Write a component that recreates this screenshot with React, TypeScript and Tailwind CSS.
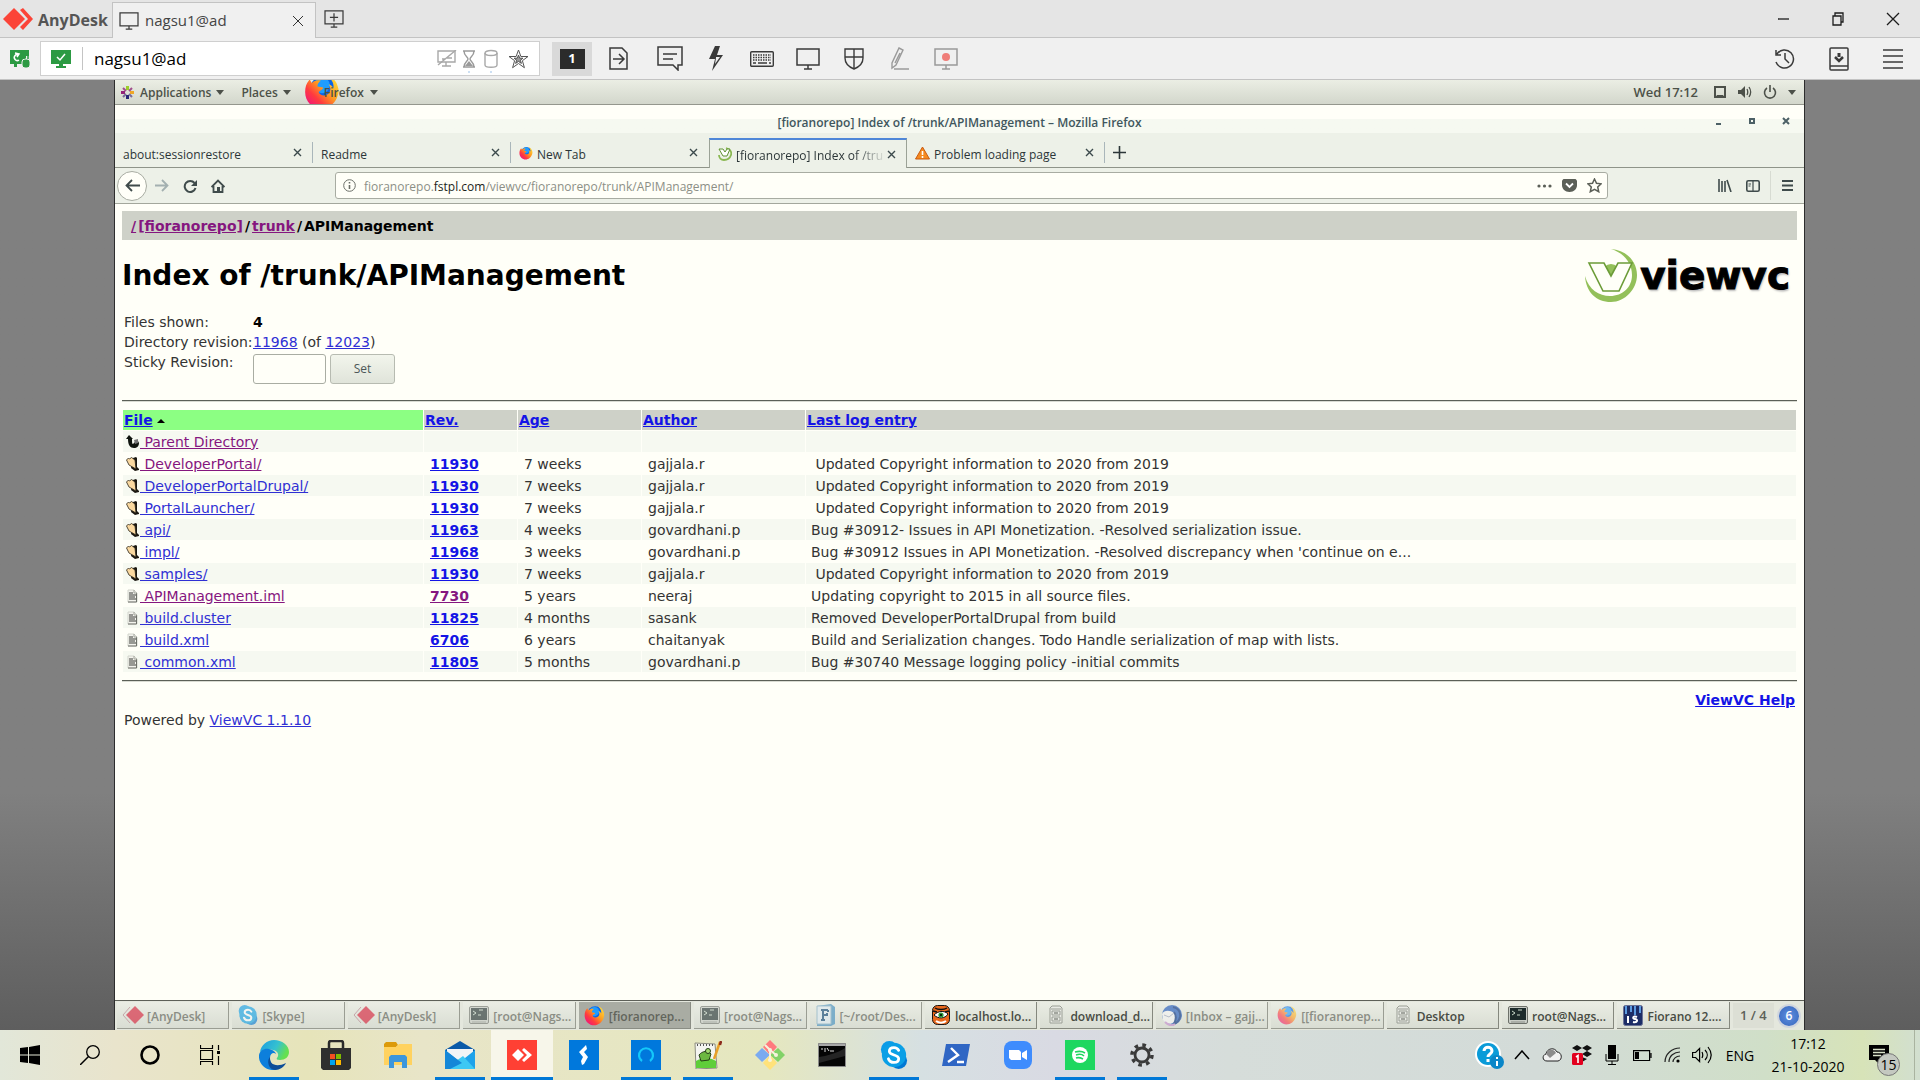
import React from "react";

type SvgProps = { w: number; h: number; box?: string; className?: string; children: React.ReactNode };

function Svg({ w, h, box, className, children }: SvgProps) {
  return (
    <svg
      width={w}
      height={h}
      viewBox={box ?? `0 0 ${w} ${h}`}
      fill="none"
      aria-hidden="true"
      className={`shrink-0 ${className ?? ""}`}
    >
      {children}
    </svg>
  );
}

/* ---------- shared icons ---------- */

function FirefoxIcon({ size, id, className }: { size: number; id: string; className?: string }) {
  return (
    <Svg w={size} h={size} box="0 0 32 32" className={className}>
      <defs>
        <linearGradient id={id} x1="0.9" y1="0.1" x2="0.1" y2="0.9">
          <stop offset="0" stopColor="#ffd83a" />
          <stop offset="0.4" stopColor="#ff9a1f" />
          <stop offset="0.7" stopColor="#ff3b3e" />
          <stop offset="1" stopColor="#f0147d" />
        </linearGradient>
      </defs>
      <circle cx="17" cy="14" r="12" fill="#0a66e8" />
      <circle cx="16" cy="10" r="7" fill="#1f9cff" />
      <path
        d="M5 5c1 1 1 2 2 3 2-2 5-3 8-2-3 2-3 4-3 5l5 1c0 2-2 2-4 4 1 3 5 4 8 2 3-2 3-6 1-9 3 1 4 3 4 4 1-4-1-8-5-11 5 1 8 5 9 9 1 3 1 5 0 8-2 7-8 12-15 12C8 31 1 25 1 16c0-4 1-8 4-11z"
        fill={`url(#${id})`}
      />
    </Svg>
  );
}

function AnyDeskMini() {
  return (
    <Svg w={22} h={20} className="opacity-70">
      <path d="M8 2L1 10l7 8" stroke="#b88a92" />
      <path d="M13 1l9 9-9 9-9-9z" fill="#d8354b" />
    </Svg>
  );
}

function SkypeIcon({ w, h, soft }: { w: number; h: number; soft?: boolean }) {
  return (
    <Svg w={w} h={h} box="0 0 30 32" className={soft ? "opacity-60" : ""}>
      <circle cx="10" cy="10" r="9" fill="#0a9be8" />
      <circle cx="20" cy="22" r="9" fill="#0078d4" />
      <circle cx="15" cy="16" r="13" fill="#0a9fe6" />
      <path
        d="M20 11c-1-2-3-3-5-3-3 0-5 1-5 4 0 5 10 3 10 8 0 3-2 4-5 4s-5-1-6-4"
        stroke="#fff"
        strokeWidth="3"
        strokeLinecap="round"
      />
    </Svg>
  );
}

function TerminalMini({ soft }: { soft?: boolean }) {
  return (
    <Svg w={20} h={18} className={soft ? "opacity-60" : ""}>
      <rect x="0.5" y="0.5" width="19" height="17" rx="1.5" fill="#c9cdc6" stroke="#6d716a" />
      <rect x="2" y="2" width="16" height="12" fill="#1c2b2b" />
      <path d="M4 5l3 2-3 2M9 9h3M10 4h4" stroke="#c8d8c8" />
      <path d="M3 16h14" stroke="#8b8f88" />
    </Svg>
  );
}

function CabinetMini() {
  return (
    <Svg w={16} h={20}>
      <path d="M2 3l2-2h8l2 2v15H2z" fill="#e8eae4" stroke="#9a9e95" />
      <path d="M3 4h10M4 6h8v4H4zM4 12h8v4H4z" stroke="#9a9e95" />
      <path d="M6 8h4M6 14h4" stroke="#5d6159" />
    </Svg>
  );
}

function FIcon() {
  return (
    <Svg w={20} h={22} className="opacity-75">
      <path d="M1 2l14-2 4 3v17l-4 2H1z" fill="#5b9cc4" />
      <path d="M1 2h14v18H1z" fill="#dfeaf0" stroke="#8fb4c8" />
      <path d="M5 6h7M5 16h4M7 6v10M7 11h4M12 6v2M11 9v3" stroke="#2f5f86" strokeWidth="2" />
    </Svg>
  );
}

function TigerIcon() {
  return (
    <Svg w={18} h={20}>
      <rect x="0.5" y="0.5" width="17" height="19" rx="5" fill="#e8681c" stroke="#1a1410" />
      <path d="M3 3c3 2 9 2 12 0M1 6l4 1M17 6l-4 1" stroke="#111" strokeWidth="1.500" />
      <path d="M2 10c4-4 10-5 14-1-3 5-10 5-14 1z" fill="#fff" stroke="#111" />
      <circle cx="9" cy="10" r="2.600" fill="#2b9a3c" />
      <circle cx="9" cy="10" r="1" fill="#000" />
      <path d="M4 16c3 2 7 2 10 0" stroke="#fff" strokeWidth="2" />
    </Svg>
  );
}

function MailBirdIcon() {
  return (
    <Svg w={22} h={21} className="opacity-75">
      <circle cx="11" cy="10" r="10" fill="#3f6fc0" />
      <path d="M1 9c2-4 8-4 12-1 2 2 2 6 0 9-3 3-9 2-11-2z" fill="#f3f3f1" />
      <path d="M12 2c5 1 8 5 7 10-1 4-3 6-6 7 2-4 3-8 0-12" stroke="#274b8c" strokeWidth="2" />
      <path d="M3 10l5 2 5-4" stroke="#a9b0c4" />
      <path d="M4 17c3 3 7 4 10 2" stroke="#c99bd0" strokeWidth="2" />
    </Svg>
  );
}

function StudioIcon() {
  return (
    <Svg w={20} h={21}>
      <rect x="0.5" y="0.5" width="19" height="20" rx="2" fill="#1c2c66" stroke="#6b7396" />
      <path d="M3 1v8M8 1v6M12 1v9M17 1v7" stroke="#5d9be0" strokeWidth="2" />
      <path d="M5 11v7M14 12c-4-2-5 2-2 2s3 4-2 3" stroke="#fff" strokeWidth="2" />
    </Svg>
  );
}

/* ---------- AnyDesk window ---------- */

function MonitorOutline({ plus, dot, w = 24, h = 22, color = "#3a3a3a" }: { plus?: boolean; dot?: boolean; w?: number; h?: number; color?: string }) {
  return (
    <Svg w={w} h={h} box="0 0 24 22">
      <path d="M1 1h22v16H1zM12 17v4M8 21h8" stroke={color} strokeWidth="1.5" />
      {plus && <path d="M12 4v10M7 9h10" stroke={color} strokeWidth="1.5" />}
      {dot && <circle cx="12" cy="9" r="4" fill="#ef7d78" />}
    </Svg>
  );
}

const WINDOW_BUTTONS = [
  { label: "Minimize", d: "M3 8h11" },
  { label: "Restore", d: "M3 5h8v9H3zM5 5V2h8v9h-2" },
  { label: "Close", d: "M2 2l12 12M14 2L2 14" },
];

function TitleBar() {
  return (
    <header className="flex h-[38px] shrink-0 items-stretch border-b border-[#c3c3c3] bg-[#e5e5e5] font-['Open_Sans',sans-serif]">
      <div className="flex w-28 items-center gap-1 pl-[3px]">
        <Svg w={31} h={24}>
          <path d="M11 1l11 11-11 11L0 12z" fill="#fb4438" />
          <path d="M17 3l3-2 10 11-10 11-3-3 8-8z" fill="#fb4438" />
        </Svg>
        <span className="pt-[2px] text-[16px] font-bold text-[#555]">AnyDesk</span>
      </div>
      <div className="mt-[2px] -mb-px flex w-[204px] items-center border border-b-0 border-[#c3c3c3] bg-[#f0f0f0] px-[6px]">
        <MonitorOutline w={20} h={18} />
        <span className="ml-[6px] flex-1 text-[15px] text-[#444]">nagsu1@ad</span>
        <button aria-label="Close session" className="flex h-6 w-[22px] items-center justify-center">
          <Svg w={12} h={12}>
            <path d="M1 1l10 10M11 1L1 11" stroke="#333" />
          </Svg>
        </button>
      </div>
      <button aria-label="New session" className="flex w-9 items-center justify-center">
        <MonitorOutline plus w={20} h={18} />
      </button>
      <div className="ml-auto flex">
        {WINDOW_BUTTONS.map((b) => (
          <button key={b.label} aria-label={b.label} className="flex w-[55px] items-center justify-center">
            <Svg w={16} h={16}>
              <path d={b.d} stroke="#1c1c1c" strokeWidth="1.3" />
            </Svg>
          </button>
        ))}
      </div>
    </header>
  );
}

function ToolButton({ label, children }: { label: string; children: React.ReactNode }) {
  return (
    <button aria-label={label} className="flex h-full w-[46px] items-center justify-center">
      {children}
    </button>
  );
}

function Toolbar() {
  const ink = "#3a3a3a";
  return (
    <div className="flex h-[42px] shrink-0 items-center border-b border-[#c3c3c3] bg-[#f0f0f0] font-['Open_Sans',sans-serif]">
      <div className="flex w-10 justify-center">
        <Svg w={20} h={20}>
          <path d="M0 1h19v6h-3v8H7v3H4v-3H0z" fill="#2c9a43" />
          <path d="M9 6a3 3 0 1 0 0 5M5 4l4 1-2 3" stroke="#fff" strokeWidth="1.5" />
          <rect x="12" y="10" width="8" height="9" rx="3" fill="#2c9a43" stroke="#f0f0f0" />
          <path d="M14 10V7c0-2 4-2 4 0v3" stroke="#2c9a43" strokeWidth="1.5" />
        </Svg>
      </div>
      <div className="flex h-[35px] w-[500px] items-center border border-[#cfcfcf] bg-white pl-[10px]">
        <Svg w={20} h={18}>
          <path d="M0 0h20v14h-8v2h3v2H5v-2h3v-2H0z" fill="#2c9a43" />
          <path d="M6 7l3 3 5-6" stroke="#fff" strokeWidth="1.5" />
        </Svg>
        <span className="mx-[11px] h-[23px] w-px bg-[#c4c4c4]" />
        <input
          aria-label="Remote address"
          defaultValue="nagsu1@ad"
          className="min-w-0 flex-1 bg-transparent pt-px text-[17px] text-black outline-none"
        />
        <Svg w={20} h={18}>
          <path d="M1 1h17v11H1zM9 12v4M5 16h9" stroke="#a8a8a8" strokeWidth="1.4" />
          <path d="M1 15L19 0M5 9h3M10 8h5" stroke="#a8a8a8" strokeWidth="1.4" />
        </Svg>
        <Svg w={14} h={24} className="mt-1 ml-[5px]">
          <path d="M1 2h12M1 18h12M2 2c0 5 4 6 4 8s-4 3-4 8M12 2c0 5-4 6-4 8s4 3 4 8" stroke="#9a9a9a" strokeWidth="1.4" />
          <path d="M3 17l4-5 4 5z" fill="#9a9a9a" />
          <circle cx="7" cy="23" r="1" fill="#bcd6f0" />
        </Svg>
        <Svg w={14} h={24} className="mt-1 ml-2">
          <path d="M1 4v12c0 3 12 3 12 0V4" stroke="#a8a8a8" strokeWidth="1.4" />
          <ellipse cx="7" cy="4" rx="6" ry="2.5" stroke="#a8a8a8" strokeWidth="1.4" />
          <circle cx="7" cy="23" r="1" fill="#bcd6f0" />
        </Svg>
        <button aria-label="Favourite" className="mr-[10px] ml-[10px] flex">
          <Svg w={21} h={20}>
            <path d="M10.500 1l2.400 6.500H20l-5.600 4.200 2 7-5.900-4.200-5.900 4.200 2-7L1 7.500h7.100z" stroke="#555" />
            <path d="M10.500 6l1.200 3.200H15l-2.600 2 1 3.200-2.900-2-2.900 2 1-3.200-2.600-2h3.300z" stroke="#555" fill="#999" />
          </Svg>
        </button>
      </div>
      <button className="ml-3 flex h-[34px] w-10 items-center justify-center bg-[#d9d9d9]">
        <span className="flex h-5 w-[25px] items-center justify-center bg-[#2b2b2b] text-[13px] font-bold text-white">1</span>
      </button>
      <div className="flex h-full w-[55px] items-center pl-[17px]">
        <button aria-label="File transfer" className="flex">
          <Svg w={20} h={24}>
            <path d="M1 1h12l5 5v16H1zM4 12h10M10 7l5 5-5 5" stroke={ink} strokeWidth="1.5" />
          </Svg>
        </button>
      </div>
      <ToolButton label="Chat">
        <Svg w={26} h={25}>
          <path d="M1 1h24v18h-4v5l-5-5H1zM6 8h14M6 13h10" stroke={ink} strokeWidth="1.5" />
        </Svg>
      </ToolButton>
      <ToolButton label="Actions">
        <Svg w={14} h={25}>
          <path d="M6 0h5L8 9h6L3 25l3-12H0z" fill={ink} />
          <path d="M7 11h4l-5 7 1-6z" fill="#f0f0f0" />
        </Svg>
      </ToolButton>
      <ToolButton label="Keyboard">
        <Svg w={24} h={16}>
          <rect x="0.7" y="0.7" width="22.600" height="14.600" rx="1" stroke={ink} strokeWidth="1.4" />
          <path d="M3 4h18M3 6.500h18M3 9h18" stroke={ink} strokeWidth="1.4" strokeDasharray="1.500 1" />
          <path d="M3 12h3M8 12h9M19 12h2" stroke={ink} strokeWidth="1.4" />
        </Svg>
      </ToolButton>
      <ToolButton label="Display">
        <MonitorOutline />
      </ToolButton>
      <ToolButton label="Permissions">
        <Svg w={20} h={22}>
          <path d="M1 1h18v9c0 5-4 9-9 11-5-2-9-6-9-11zM10 1v20M1 9h18" stroke={ink} strokeWidth="1.4" />
        </Svg>
      </ToolButton>
      <ToolButton label="Whiteboard">
        <Svg w={20} h={23}>
          <path d="M9 1l4 2-7 15-4 3v-5zM4 22h15M10 6L5 16" stroke="#9a9a9a" strokeWidth="1.4" />
        </Svg>
      </ToolButton>
      <ToolButton label="Record">
        <MonitorOutline dot color="#999" />
      </ToolButton>
      <div className="ml-auto flex h-full">
        <button aria-label="History" className="flex w-[54px] items-center justify-center">
          <Svg w={22} h={22}>
            <path d="M3 6a9 9 0 1 1-1 8M2 2v5h5M11 5v6l4 4" stroke={ink} strokeWidth="1.5" />
          </Svg>
        </button>
        <button aria-label="Install" className="flex w-[54px] items-center justify-center">
          <Svg w={20} h={24}>
            <rect x="1" y="1" width="18" height="22" rx="1" stroke={ink} strokeWidth="1.5" />
            <path d="M1 19h18" stroke={ink} strokeWidth="1.5" />
            <path d="M10 6v4" stroke={ink} strokeWidth="3" />
            <path d="M6 10l4 4 4-4" stroke={ink} strokeWidth="2.500" />
          </Svg>
        </button>
        <button aria-label="Menu" className="flex w-[54px] items-center justify-center">
          <Svg w={20} h={22}>
            <path d="M0 2h20M0 8h20M0 14h20M0 20h20" stroke={ink} strokeWidth="1.4" />
          </Svg>
        </button>
      </div>
    </div>
  );
}

/* ---------- remote desktop ---------- */

function Caret() {
  return (
    <Svg w={8} h={5}>
      <path d="M0 0h8L4 5z" fill="#4c5049" />
    </Svg>
  );
}

function GnomePanel() {
  return (
    <div className="flex h-[25px] shrink-0 items-center border-b border-[#94978d] bg-linear-to-b from-[#ebeee4] to-[#d3d7cc] pl-[6px] text-[12px] font-semibold text-[#4c5148]">
      <button className="flex items-center">
        <Svg w={13} h={13}>
          <path d="M5 0h3v4H5z" fill="#9ccd2a" />
          <path d="M9 5h4v3H9z" fill="#efa724" />
          <path d="M5 9h3v4H5z" fill="#262577" />
          <path d="M0 5h4v3H0z" fill="#932279" />
          <path d="M2 2l3 3M11 2L8 5" stroke="#a14f8c" strokeWidth="2" />
          <path d="M2 11l3-3M11 11L8 8" stroke="#7a6a9a" strokeWidth="2" />
        </Svg>
        <span className="mr-[5px] ml-[6px] pt-px">Applications</span>
        <Caret />
      </button>
      <button className="ml-[17px] flex items-center gap-[5px]">
        <span className="pt-px">Places</span>
        <Caret />
      </button>
      <button className="relative ml-[13px] flex h-6 items-center gap-[6px] overflow-hidden pl-[20px]">
        <FirefoxIcon size={36} id="fx-panel" className="absolute top-[-6px] left-0" />
        <span className="relative pt-px">Firefox</span>
        <Caret />
      </button>
      <span className="ml-auto pt-px text-[13px]">Wed 17:12</span>
      <div className="mr-[8px] ml-[15px] flex items-center gap-[11px]">
        <Svg w={14} h={14}>
          <path d="M2 2h10v10H2z" stroke="#4c5049" strokeWidth="2" />
          <path d="M2 13l2-3h6l2 3zM1 1h3L1 4zM13 1h-3l3 3z" fill="#4c5049" />
        </Svg>
        <Svg w={14} h={14}>
          <path d="M0 5h3l4-4v12L3 9H0z" fill="#4c5049" />
          <path d="M9 4c1 2 1 4 0 6M11 2c2 3 2 7 0 10" stroke="#4c5049" strokeWidth="1.3" />
        </Svg>
        <Svg w={14} h={14}>
          <path d="M4 3a5.500 5.500 0 1 0 6 0M7 0v7" stroke="#4c5049" strokeWidth="1.6" />
        </Svg>
        <Caret />
      </div>
    </div>
  );
}

function CloseX() {
  return (
    <Svg w={9} h={9}>
      <path d="M1 1l7 7M8 1L1 8" stroke="#3c4a4c" strokeWidth="1.4" />
    </Svg>
  );
}

const TABS: { title: string; icon?: "fx" | "vc" | "warn"; active?: boolean }[] = [
  { title: "about:sessionrestore" },
  { title: "Readme" },
  { title: "New Tab", icon: "fx" },
  { title: "[fioranorepo] Index of /tru", icon: "vc", active: true },
  { title: "Problem loading page", icon: "warn" },
];

function TabIcon({ kind }: { kind: "fx" | "vc" | "warn" }) {
  if (kind === "fx") return <FirefoxIcon size={14} id="fx-tab" />;
  if (kind === "vc")
    return (
      <Svg w={14} h={14}>
        <path d="M8 1c4 1 6 4 5 7s-4 5-7 5-5-2-5-5" stroke="#8ab852" strokeWidth="1.8" />
        <path d="M1 2h4l2 3 2-3h3L9 9H5z" fill="#fff" stroke="#5f9232" />
      </Svg>
    );
  return (
    <Svg w={15} h={14}>
      <path d="M7.500 1L14.500 13H0.500z" fill="#f58a1f" stroke="#c85a10" strokeLinejoin="round" />
      <path d="M7.500 5v4M7.500 10v2" stroke="#fff" strokeWidth="1.6" />
    </Svg>
  );
}

function TabStrip() {
  return (
    <div className="flex h-[35px] items-end border-b border-[#8f9489] text-[12px] text-[#2c3638]">
      {TABS.map((t) => (
        <div
          key={t.title}
          className={
            t.active
              ? "-mb-px flex h-[30px] w-[198px] items-center border border-t-2 border-b-0 border-[#9ba296] border-t-[#4f87d8] bg-[#edf1e8] pr-[10px] pl-[8px]"
              : "flex h-[29px] w-[198px] items-center pl-[8px]"
          }
        >
          {t.icon && (
            <span className="mr-1 flex">
              <TabIcon kind={t.icon} />
            </span>
          )}
          <a
            href="#tab"
            className={
              t.active
                ? "min-w-0 flex-1 pt-1 whitespace-nowrap [mask-image:linear-gradient(to_right,black_78%,transparent)]"
                : "min-w-0 flex-1 pt-1 whitespace-nowrap"
            }
          >
            {t.title}
          </a>
          <button aria-label={`Close ${t.title}`} className="flex">
            <CloseX />
          </button>
          {!t.active && <span className={`ml-[10px] h-[21px] w-px ${t.title === "New Tab" ? "" : "bg-[#a9b6ba]"}`} />}
        </div>
      ))}
      <button aria-label="Open a new tab" className="ml-2 flex h-[29px] items-center">
        <Svg w={13} h={13}>
          <path d="M6.500 0v13M0 6.500h13" stroke="#2c3638" strokeWidth="1.6" />
        </Svg>
      </button>
    </div>
  );
}

function NavBar() {
  const ink = "#3f4b4b";
  return (
    <div className="flex h-9 items-center border-b border-[#a3a79c] bg-[#edf1e8] pr-[10px] pl-[2px]">
      <button aria-label="Back" className="flex h-[30px] w-[30px] items-center justify-center rounded-full border border-[#a8aca2] bg-[#fffff8]">
        <Svg w={15} h={13}>
          <path d="M15 6.500H2M7 1L1.500 6.500 7 12" stroke={ink} strokeWidth="1.8" />
        </Svg>
      </button>
      <button aria-label="Forward" className="ml-[8px] flex">
        <Svg w={14} h={13}>
          <path d="M0 6.500h12M7 1l5.500 5.500L7 12" stroke="#a3b0b0" strokeWidth="1.8" />
        </Svg>
      </button>
      <button aria-label="Reload" className="ml-[14px] flex">
        <Svg w={14} h={14}>
          <path d="M11.500 4A5.500 5.500 0 1 0 12.500 9" stroke={ink} strokeWidth="2" />
          <path d="M14 1v6H8z" fill={ink} />
        </Svg>
      </button>
      <button aria-label="Home" className="ml-[14px] flex">
        <Svg w={14} h={14}>
          <path d="M0.500 8L7 1.500 13.500 8M2.500 7v6h9V7" stroke={ink} strokeWidth="1.8" />
          <path d="M6 8h3v5H6z" fill={ink} />
        </Svg>
      </button>
      <label className="mx-[110px] flex h-[27px] flex-1 items-center rounded-[3px] border border-[#a8aca2] bg-[#fffff8] pr-[5px] pl-[7px]">
        <Svg w={13} h={13}>
          <circle cx="6.500" cy="6.500" r="5.800" stroke="#6b6f68" />
          <path d="M6.500 3v1.500M6.500 6v4" stroke="#6b6f68" strokeWidth="1.6" />
        </Svg>
        <span className="ml-2 flex-1 pt-[2px] text-[12px] text-[#8c8f86]">
          fioranorepo.<span className="text-[#1d1f1b]">fstpl.com</span>/viewvc/fioranorepo/trunk/APIManagement/
        </span>
        <span className="flex items-center gap-[10px]">
          <Svg w={15} h={4}>
            <circle cx="2" cy="2" r="1.600" fill="#5b5f57" />
            <circle cx="7.500" cy="2" r="1.600" fill="#5b5f57" />
            <circle cx="13" cy="2" r="1.600" fill="#5b5f57" />
          </Svg>
          <Svg w={15} h={13}>
            <path d="M0 1.500L1.500 0h12L15 1.500V6c0 4-3 7-7.500 7S0 10 0 6z" fill="#5b5f57" />
            <path d="M4 4.500l3.500 3.500L11 4.500" stroke="#fff" strokeWidth="1.800" />
          </Svg>
          <Svg w={15} h={15}>
            <path d="M7.500 1l2 4.300 4.700.5-3.500 3.200 1 4.700-4.200-2.400-4.200 2.400 1-4.700L.8 5.800l4.700-.5z" stroke="#5b5f57" strokeWidth="1.500" />
          </Svg>
        </span>
      </label>
      <button aria-label="Library" className="flex">
        <Svg w={14} h={13}>
          <path d="M1 0v13M4 2v11M7 2v11M9 1l4 12" stroke={ink} strokeWidth="1.600" />
        </Svg>
      </button>
      <button aria-label="Sidebars" className="ml-[14px] flex">
        <Svg w={14} h={12}>
          <rect x="0.800" y="0.800" width="12.400" height="10.400" rx="1.500" stroke={ink} strokeWidth="1.600" />
          <path d="M7 1v10M2.500 4h2.500M2.500 6h2" stroke={ink} strokeWidth="1.200" />
        </Svg>
      </button>
      <span className="mx-[10px] h-[29px] w-px bg-[#d7dbd2]" />
      <button aria-label="Open menu" className="flex w-[13px] justify-center">
        <Svg w={11} h={11}>
          <path d="M0 1h11M0 5.500h11M0 10h11" stroke={ink} strokeWidth="1.800" />
        </Svg>
      </button>
    </div>
  );
}

/* ---------- ViewVC page ---------- */

const BLUE = "text-[#1414e6]";
const LINK_BLUE = "text-[#3030d4] underline";
const LINK_VISITED = "text-[#85167f] underline";

type Row = { kind: "up" | "dir" | "file"; name: string; visited?: boolean; rev?: string; age?: string; author?: string; log?: string };

const COPYRIGHT = "\u00a0Updated Copyright information to 2020 from 2019";

const ROWS: Row[] = [
  { kind: "up", name: "Parent Directory", visited: true },
  { kind: "dir", name: "DeveloperPortal/", visited: true, rev: "11930", age: "7 weeks", author: "gajjala.r", log: COPYRIGHT },
  { kind: "dir", name: "DeveloperPortalDrupal/", rev: "11930", age: "7 weeks", author: "gajjala.r", log: COPYRIGHT },
  { kind: "dir", name: "PortalLauncher/", rev: "11930", age: "7 weeks", author: "gajjala.r", log: COPYRIGHT },
  { kind: "dir", name: "api/", rev: "11963", age: "4 weeks", author: "govardhani.p", log: "Bug #30912- Issues in API Monetization. -Resolved serialization issue." },
  { kind: "dir", name: "impl/", rev: "11968", age: "3 weeks", author: "govardhani.p", log: "Bug #30912 Issues in API Monetization. -Resolved discrepancy when 'continue on e..." },
  { kind: "dir", name: "samples/", rev: "11930", age: "7 weeks", author: "gajjala.r", log: COPYRIGHT },
  { kind: "file", name: "APIManagement.iml", visited: true, rev: "7730", age: "5 years", author: "neeraj", log: "Updating copyright to 2015 in all source files." },
  { kind: "file", name: "build.cluster", rev: "11825", age: "4 months", author: "sasank", log: "Removed DeveloperPortalDrupal from build" },
  { kind: "file", name: "build.xml", rev: "6706", age: "6 years", author: "chaitanyak", log: "Build and Serialization changes. Todo Handle serialization of map with lists." },
  { kind: "file", name: "common.xml", rev: "11805", age: "5 months", author: "govardhani.p", log: "Bug #30740 Message logging policy -initial commits" },
];

function RowIcon({ kind }: { kind: Row["kind"] }) {
  if (kind === "up")
    return (
      <Svg w={14} h={14}>
        <path d="M0 4l3-4 4 4H6c0 3 0 5 1 5l2-2 3-1 1 2c0 3-2 5-5 5-4 0-6-3-6-9z" fill="#10150f" />
        <path d="M8 5l4-1v4l-3 1z" fill="#777" />
      </Svg>
    );
  if (kind === "dir")
    return (
      <Svg w={14} h={14}>
        <path d="M7 1l3-1 1 1v9l2 2v1l-4 1-4-3z" fill="#1b1710" />
        <path d="M0.500 3l2-2 1 1 2-1.500L9 3l1 9-7-4z" fill="#fbd9a0" stroke="#2a2418" strokeWidth="0.800" />
      </Svg>
    );
  return (
    <Svg w={14} h={14}>
      <path d="M2 1h6l3 3v9H2z" fill="#f4f4ee" stroke="#d2d4cc" />
      <path d="M3 4h4M3 6h7M3 8h6M3 10h7" stroke="#3a3d38" />
      <path d="M10.500 4v9H2" stroke="#6e716a" />
      <path d="M8 1v3h3" stroke="#a0a39a" />
    </Svg>
  );
}

function ViewVcLogo() {
  return (
    <div className="flex items-center" role="img" aria-label="ViewVC">
      <Svg w={54} h={56}>
        <path d="M27 1c15 1 26 12 26 26S41 54 27 54C12 54 2 44 1 28c4 14 14 20 25 20 13 0 22-9 22-21S40 5 27 1z" fill="#93c05a" />
        <circle cx="27" cy="25" r="9" fill="#93c05a" />
        <path d="M5 15h15l7 13 7-13h14L35 43H19z" fill="#fffff8" stroke="#6c9c38" strokeWidth="1.600" />
      </Svg>
      <span className="ml-[2px] font-['DejaVu_Sans',sans-serif] text-[39px] leading-[40px] font-bold text-black [-webkit-text-stroke:1px_black] [text-shadow:1px_2px_2px_#bbb]">
        viewvc
      </span>
    </div>
  );
}

function Rule() {
  return <hr className="h-[2px] border-0 border-t border-b border-t-[#5c6057] border-b-[#d9dbd2]" />;
}

function ViewVcPage() {
  const head = ["Rev.", "Age", "Author", "Last log entry"];
  return (
    <main className="min-h-0 flex-1 bg-[#fffff8] px-[7px] pt-[7px] font-['DejaVu_Sans',sans-serif] text-[14px] leading-5 text-[#333]">
      <nav className="flex h-[29px] items-center gap-[2px] bg-[#ced1c8] px-[9px] font-bold text-black">
        <a href="#root" className={LINK_VISITED}>/</a>
        <a href="#repo" className={LINK_VISITED}>[fioranorepo]</a>
        <span>/</span>
        <a href="#trunk" className={LINK_VISITED}>trunk</a>
        <span>/</span>
        <span>APIManagement</span>
      </nav>
      <div className="flex justify-between">
        <h1 className="mt-[18px] text-[28px] leading-9 font-bold text-black">Index of /trunk/APIManagement</h1>
        <div className="mt-[8px] mr-[7px] h-14">
          <ViewVcLogo />
        </div>
      </div>
      <div className="mt-[8px] grid grid-cols-[128px_1fr] gap-x-px pl-[2px]">
        <span>Files shown:</span>
        <strong className="font-bold text-black">4</strong>
        <span className="whitespace-nowrap">Directory revision:</span>
        <span>
          <a href="#rev" className={LINK_BLUE}>11968</a> (of <a href="#head" className={LINK_BLUE}>12023</a>)
        </span>
        <label htmlFor="sticky">Sticky Revision:</label>
        <form className="mt-[2px] flex gap-1" onSubmit={(e) => e.preventDefault()}>
          <input id="sticky" className="h-[30px] w-[73px] rounded-[3px] border border-[#a9ada3] bg-[#fffff8] px-1 outline-none" />
          <button className="h-[30px] w-[65px] rounded-[3px] border border-[#b7bbb1] bg-linear-to-b from-[#f2f5ec] to-[#e0e4da] font-['Open_Sans',sans-serif] text-[12px] text-[#4b5759]">
            Set
          </button>
        </form>
      </div>
      <div className="mt-4 mb-2">
        <Rule />
      </div>
      <table className="-mt-px w-full table-fixed border-separate border-spacing-px text-left">
        <colgroup>
          <col className="w-[300px]" />
          <col className="w-[93px]" />
          <col className="w-[123px]" />
          <col className="w-[163px]" />
          <col />
        </colgroup>
        <thead>
          <tr className="h-5 bg-[#ced1c8]">
            <th className="bg-[#8cff83] px-px py-0 font-bold">
              <a href="#file" className={`${BLUE} underline`}>File</a>
              <svg width="8" height="4" viewBox="0 0 8 4" className="ml-1 inline-block" aria-hidden="true">
                <path d="M0 4l4-4 4 4z" fill="#000" />
              </svg>
            </th>
            {head.map((h) => (
              <th key={h} className="px-px py-0 font-bold">
                <a href="#sort" className={`${BLUE} underline`}>{h}</a>
              </th>
            ))}
          </tr>
        </thead>
        <tbody>
          {ROWS.map((r, i) => (
            <tr key={r.name} className={i % 2 === 0 ? "h-[21px] bg-[#f6f9f1]" : "h-[21px]"}>
              <td className="p-0 pl-[3px]">
                <div className="flex items-center">
                  <RowIcon kind={r.kind} />
                  <a href="#entry" className={`whitespace-pre ${r.visited ? LINK_VISITED : LINK_BLUE}`}>
                    {` ${r.name}`}
                  </a>
                </div>
              </td>
              <td className="p-0 pl-[6px] font-bold">
                {r.rev && (
                  <a href="#rev" className={r.visited && r.kind === "file" ? LINK_VISITED : `${BLUE} underline`}>
                    {r.rev}
                  </a>
                )}
              </td>
              <td className="p-0 pl-[6px]">{r.age}</td>
              <td className="p-0 pl-[6px]">{r.author}</td>
              <td className="p-0 pl-[5px] whitespace-nowrap">{r.log}</td>
            </tr>
          ))}
        </tbody>
      </table>
      <div className="mt-[7px]">
        <Rule />
      </div>
      <footer className="flex justify-between px-[2px] pt-[8px]">
        <span className="pt-5">
          Powered by <a href="#viewvc" className={LINK_BLUE}>ViewVC 1.1.10</a>
        </span>
        <a href="#help" className={`font-bold underline ${BLUE}`}>ViewVC Help</a>
      </footer>
    </main>
  );
}

/* ---------- remote window list ---------- */

const WINDOWS: { title: string; icon: React.ReactNode; state: "min" | "normal" | "active" }[] = [
  { title: "[AnyDesk]", icon: <AnyDeskMini />, state: "min" },
  { title: "[Skype]", icon: <SkypeIcon w={20} h={22} soft />, state: "min" },
  { title: "[AnyDesk]", icon: <AnyDeskMini />, state: "min" },
  { title: "[root@Nags...", icon: <TerminalMini soft />, state: "min" },
  { title: "[fioranorep...", icon: <FirefoxIcon size={21} id="fx-w1" />, state: "active" },
  { title: "[root@Nags...", icon: <TerminalMini soft />, state: "min" },
  { title: "[~/root/Des...", icon: <FIcon />, state: "min" },
  { title: "localhost.lo...", icon: <TigerIcon />, state: "normal" },
  { title: "download_d...", icon: <CabinetMini />, state: "normal" },
  { title: "[Inbox – gajj...", icon: <MailBirdIcon />, state: "min" },
  { title: "[[fioranorep...", icon: <FirefoxIcon size={20} id="fx-w2" className="opacity-60" />, state: "min" },
  { title: "Desktop", icon: <CabinetMini />, state: "normal" },
  { title: "root@Nags...", icon: <TerminalMini />, state: "normal" },
  { title: "Fiorano 12....", icon: <StudioIcon />, state: "normal" },
];

const WINDOW_CLASS = {
  min: "border-[#9a9d93] bg-linear-to-b from-[#eaede4] to-[#d9ddd3] text-[#8a8d84]",
  normal: "border-[#85887e] bg-linear-to-b from-[#eaede4] to-[#d9ddd3] text-[#474b43]",
  active: "border-[#8a8d84] bg-[#a9aca3] text-[#62655c]",
};

function WindowList() {
  return (
    <div className="flex h-[30px] shrink-0 items-center gap-[3px] border-t border-[#5d6058] bg-[#e4e7dd] pr-[3px] pl-[2px] text-[12px] font-semibold">
      {WINDOWS.map((w, i) => (
        <button
          key={i}
          className={`flex h-[27px] min-w-0 flex-1 items-center gap-[3px] border-r border-b pl-[5px] whitespace-nowrap ${WINDOW_CLASS[w.state]}`}
        >
          <span className="flex w-[22px] shrink-0 justify-center">{w.icon}</span>
          <span className="pt-1">{w.title}</span>
        </button>
      ))}
      <span className="flex h-[25px] w-[41px] items-center justify-center bg-[#dcdfd5] text-[13px] text-[#5d6159]">1 / 4</span>
      <span className="flex h-6 w-6 items-center justify-center rounded-full border-2 border-[#d0d5de] bg-radial from-[#5f8fe0] to-[#3565bb] text-[12px] text-white">
        6
      </span>
    </div>
  );
}

function RemoteDesktop() {
  return (
    <section className="flex min-h-0 flex-1 justify-center bg-linear-to-b from-[#808080] from-75% to-[#5e5e5e] pr-[115px] pl-[114px]">
      <div className="flex min-w-0 flex-1 flex-col border-x border-[#2d2d2d] bg-[#edf1e8] font-['Open_Sans',sans-serif]">
        <GnomePanel />
        <div className="flex h-7 shrink-0 items-center bg-linear-to-b from-[#fffff8] from-50% to-[#f6f9f1] to-50% pt-1 text-[12px]">
          <span className="w-[120px]" />
          <h2 className="flex-1 pt-[3px] text-center font-semibold text-[#3f565d]">[fioranorepo] Index of /trunk/APIManagement – Mozilla Firefox</h2>
          <div className="flex w-[120px] justify-end gap-[26px] pr-[14px]">
            <button aria-label="Minimize window" className="flex">
              <Svg w={8} h={8}>
                <path d="M2 7h5" stroke="#4c6066" strokeWidth="2" />
              </Svg>
            </button>
            <button aria-label="Maximize window" className="flex">
              <Svg w={8} h={8}>
                <path d="M2 2h4v4H2z" stroke="#4c6066" strokeWidth="2" />
              </Svg>
            </button>
            <button aria-label="Close window" className="flex">
              <Svg w={8} h={8}>
                <path d="M1 1l6 6M7 1L1 7" stroke="#4c6066" strokeWidth="2" />
              </Svg>
            </button>
          </div>
        </div>
        <TabStrip />
        <NavBar />
        <ViewVcPage />
        <WindowList />
      </div>
    </section>
  );
}

/* ---------- Windows taskbar ---------- */

const START_ITEMS: { label: string; icon: React.ReactNode }[] = [
  {
    label: "Start",
    icon: (
      <Svg w={20} h={20}>
        <path d="M0 3l8-1v7.500H0zM9 2l11-2v9.500H9zM0 10.500h8V18l-8-1zM9 10.500h11V20L9 18z" fill="#000" />
      </Svg>
    ),
  },
  {
    label: "Search",
    icon: (
      <Svg w={20} h={20}>
        <circle cx="13" cy="7" r="6.300" stroke="#000" strokeWidth="1.300" />
        <path d="M8.500 11.500L0 20" stroke="#000" strokeWidth="1.500" />
      </Svg>
    ),
  },
  {
    label: "Cortana",
    icon: (
      <Svg w={20} h={20}>
        <circle cx="10" cy="10" r="8.500" stroke="#000" strokeWidth="2.600" />
      </Svg>
    ),
  },
  {
    label: "Task View",
    icon: (
      <Svg w={20} h={20}>
        <path d="M0.500 0v3.500h12V0M0.500 5.500h12v9H0.500zM0.500 20v-3.500h12V20M18.500 0v5M18.500 11v9" stroke="#000" strokeWidth="1.200" />
        <path d="M17 6h3v3h-3z" fill="#000" />
      </Svg>
    ),
  },
];

const APPS: { label: string; running?: boolean; focused?: boolean; icon: React.ReactNode }[] = [
  {
    label: "Edge",
    running: true,
    icon: (
      <Svg w={30} h={30}>
        <defs>
          <linearGradient id="edge-top" x1="0" y1="0" x2="1" y2="0.4">
            <stop offset="0" stopColor="#1b9de2" />
            <stop offset="0.600" stopColor="#35c1d0" />
            <stop offset="1" stopColor="#66e04f" />
          </linearGradient>
        </defs>
        <path d="M1 12C2 5 8 0 15 0c8 0 15 5 15 12 0 5-4 8-9 8-3 0-4-1-3-2 2-2 2-7-4-8-5-1-10 0-13 2z" fill="url(#edge-top)" />
        <path d="M0 15c1-5 6-7 10-6 5 1 7 4 7 5-2-2-6-1-6 4 0 6 4 9 8 11-10 4-20-4-19-14z" fill="#0d7fdc" />
        <path d="M11 17c-1 7 6 11 16 6-2 4-6 7-11 7-6 0-9-9-5-13z" fill="#0c4d98" />
      </Svg>
    ),
  },
  {
    label: "Microsoft Store",
    icon: (
      <Svg w={30} h={30}>
        <path d="M8 9V3c0-2 1-2 2-2h10c1 0 2 0 2 2v6" stroke="#2a2a2a" strokeWidth="2.500" />
        <path d="M0 8h30v20l-2 2H2l-2-2z" fill="#2f2f2f" />
        <path d="M9 14h5v5H9z" fill="#f25022" />
        <path d="M15 14h5v5h-5z" fill="#7fba00" />
        <path d="M9 20h5v5H9z" fill="#00a4ef" />
        <path d="M15 20h5v5h-5z" fill="#ffb900" />
      </Svg>
    ),
  },
  {
    label: "File Explorer",
    icon: (
      <Svg w={28} h={26}>
        <path d="M0 2l2-2h10l2 3-2 2H0z" fill="#dc9a0a" />
        <path d="M0 5h12l3-3h13v21H0z" fill="#ffd25f" />
        <path d="M5 26V15l2-2h14l2 2v11h-5v-6h-8v6z" fill="#3c96dc" />
      </Svg>
    ),
  },
  {
    label: "Mail",
    running: true,
    icon: (
      <Svg w={30} h={30}>
        <path d="M0 10L15 1l15 9v4H0z" fill="#0a5aa8" />
        <path d="M2 9h26v10H2z" fill="#f2f4f6" />
        <path d="M0 10l15 12L30 10v19H0z" fill="#1ea2ea" />
        <path d="M0 29l18-13L30 29z" fill="#3cc8f4" />
        <path d="M0 10l17 13L5 29H0z" fill="#1487d8" />
      </Svg>
    ),
  },
  {
    label: "AnyDesk",
    running: true,
    focused: true,
    icon: (
      <Svg w={30} h={30}>
        <path d="M0 0h30v30H0z" fill="#ff4034" />
        <path d="M11 9l6 6-6 6-6-6zM15 10l2-2 8 7-8 7-2-2 5-5z" fill="#fff" />
      </Svg>
    ),
  },
  {
    label: "Sway",
    icon: (
      <Svg w={30} h={30}>
        <path d="M0 0h30v30H0z" fill="#0078dc" />
        <path d="M17 5l1 4-3 3 4 5-4 7-2 1-1-4 2-4-4-5z" fill="#fff" />
      </Svg>
    ),
  },
  {
    label: "Alexa",
    running: true,
    icon: (
      <Svg w={30} h={30}>
        <path d="M0 0h30v30H0z" fill="#0078dc" />
        <path d="M11 21a7 7 0 1 1 8 0" stroke="#14c8fa" strokeWidth="2.200" />
      </Svg>
    ),
  },
  {
    label: "Notepad++",
    running: true,
    icon: (
      <Svg w={28} h={28}>
        <path d="M1 2l20 1 2 24-21 1z" fill="#f4f4f0" stroke="#8c8c80" />
        <path d="M2 20c6-4 14-4 20 0v7H2z" fill="#5fce3a" />
        <path d="M5 14c3-4 9-5 12-1l-2 6-8 1z" fill="#6cb840" stroke="#254016" />
        <circle cx="14" cy="10" r="2.500" fill="#a4dc70" stroke="#254016" />
        <path d="M3 4h18" stroke="#555" strokeDasharray="1 2" strokeWidth="2" />
        <path d="M26 1l-6 17" stroke="#e8a028" strokeWidth="2.500" />
        <path d="M27 0l-1 4" stroke="#8c2a1c" strokeWidth="2.500" />
      </Svg>
    ),
  },
  {
    label: "Git",
    icon: (
      <Svg w={30} h={30}>
        <path d="M15 0l7 7-7 8-7-8z" fill="#ff7a7e" />
        <path d="M23 8l7 7-7 7-8-7z" fill="#82d268" />
        <path d="M7 8l8 7-8 7-7-7z" fill="#7aaaf0" />
        <path d="M15 15l7 8-7 7-7-7z" fill="#ffe27a" />
        <path d="M10 5l5 5v10M15 10l6 5" stroke="#f6f2de" strokeWidth="2" />
        <circle cx="15" cy="10" r="2" fill="#f6f2de" />
        <circle cx="21" cy="15" r="2" fill="#f6f2de" />
        <circle cx="15" cy="20" r="2" fill="#f6f2de" />
      </Svg>
    ),
  },
  {
    label: "Command Prompt",
    icon: (
      <Svg w={28} h={24}>
        <path d="M0.500 0.500h27v23H0.500z" fill="#050505" stroke="#8a8a8a" />
        <path d="M1 1h26v2H1z" fill="#a8a8a8" />
        <path d="M1 14C8 13 20 10 27 5v8L1 20z" fill="#242424" />
        <path d="M3 6h2M7 5v4M9 5l2 3M12 8h4" stroke="#ddd" />
      </Svg>
    ),
  },
  { label: "Skype", running: true, icon: <SkypeIcon w={28} h={30} /> },
  {
    label: "PowerShell",
    icon: (
      <Svg w={28} h={22}>
        <path d="M4 0h24l-4 22H0z" fill="#2f66c4" />
        <path d="M9 4l7 7-10 7M15 18h7" stroke="#fff" strokeWidth="2.400" />
      </Svg>
    ),
  },
  {
    label: "Zoom",
    icon: (
      <Svg w={28} h={28}>
        <rect width="28" height="28" rx="8" fill="#3f8cfd" />
        <path d="M5 9h10l2 2v8H7l-2-2zM18 12l5-3v10l-5-3z" fill="#fff" />
      </Svg>
    ),
  },
  {
    label: "Spotify",
    running: true,
    icon: (
      <Svg w={30} h={30}>
        <path d="M0 0h30v30H0z" fill="#1ed760" />
        <circle cx="15" cy="15" r="8" fill="#fff" />
        <path d="M10 12c4-1 7-1 10 1M11 15c3-1 6-1 8 1M11 18c3-1 5 0 7 1" stroke="#1ed760" strokeWidth="1.600" />
      </Svg>
    ),
  },
  {
    label: "Settings",
    running: true,
    icon: (
      <Svg w={24} h={24}>
        <circle cx="12" cy="12" r="7" stroke="#3a3a3a" strokeWidth="2.800" />
        <circle cx="12" cy="12" r="10" stroke="#3a3a3a" strokeWidth="3.500" strokeDasharray="3.600 4.254" />
      </Svg>
    ),
  },
];

function TrayCell({ label, children }: { label: string; children: React.ReactNode }) {
  return (
    <button aria-label={label} className="flex w-[30px] items-center justify-center">
      {children}
    </button>
  );
}

function Taskbar() {
  return (
    <footer className="flex h-[50px] shrink-0 items-stretch bg-[linear-gradient(to_right,#e2e7d9_0%,#e9e4cc_6%,#e6e4ba_16%,#e8e5c8_22%,#e5e7bf_40%,#d6e0e2_48%,#d9dae3_55%,#d6ddda_64%,#d3dbd8_80%,#d0dfc8_92%,#d7e3b8_97%,#d2dfd0_100%)] font-['Open_Sans',sans-serif] text-black">
      {START_ITEMS.map((s) => (
        <button key={s.label} aria-label={s.label} className="flex w-[60px] items-center justify-center">
          {s.icon}
        </button>
      ))}
      <div className="ml-[3px] flex">
        {APPS.map((a) => (
          <button
            key={a.label}
            aria-label={a.label}
            className={`relative flex w-[62px] items-center justify-center ${a.focused ? "bg-[#f7f6ea]" : ""}`}
          >
            {a.icon}
            {a.running && (
              <span className={`absolute bottom-0 h-[3px] bg-[#0078d7] ${a.focused ? "inset-x-0" : "inset-x-[6px]"}`} />
            )}
          </button>
        ))}
      </div>
      <div className="ml-auto flex">
        <button aria-label="Get help" className="flex w-[36px] items-center justify-center">
          <Svg w={29} h={29}>
            <circle cx="13" cy="13" r="13" fill="#fff" />
            <circle cx="13" cy="13" r="11" fill="#0a9bd8" />
            <path d="M9 10c0-5 8-5 8 0 0 3-4 3-4 6M13 18v3" stroke="#fff" strokeWidth="3" />
            <circle cx="22" cy="21" r="7" fill="#0a86c8" />
            <path d="M22 20v5M22 16v2" stroke="#fff" strokeWidth="2" />
          </Svg>
        </button>
        <TrayCell label="Show hidden icons">
          <Svg w={16} h={10}>
            <path d="M1 9l7-8 7 8" stroke="#000" strokeWidth="1.500" />
          </Svg>
        </TrayCell>
        <TrayCell label="OneDrive">
          <Svg w={20} h={14}>
            <path d="M5 13c-5 0-5-6-1-7 1-6 9-7 11-2 5 0 6 8 1 9z" fill="#f2f2f2" stroke="#222" />
            <path d="M4 6c1-5 8-6 10-1l-6 5z" fill="#8c8c8c" />
          </Svg>
        </TrayCell>
        <TrayCell label="Dropbox">
          <Svg w={20} h={20}>
            <path d="M5 0l5 3-5 3-5-3zM15 0l5 3-5 3-5-3zM15 6l5 3-5 3-5-3zM10 12l5 2-5 3z" fill="#111" />
            <rect x="0" y="8" width="11" height="12" rx="1.500" fill="#e2001e" />
            <path d="M4 12l2-1.500V18" stroke="#fff" strokeWidth="1.600" />
          </Svg>
        </TrayCell>
        <TrayCell label="Microphone">
          <Svg w={14} h={20}>
            <path d="M3 0h8v14H3z" fill="#000" />
            <path d="M1 9v7h12V9M7 16v3M3 19.500h8" stroke="#000" />
          </Svg>
        </TrayCell>
        <TrayCell label="Battery">
          <Svg w={19} h={11}>
            <path d="M0.600 0.600h16v10h-16zM18 3v5" stroke="#000" strokeWidth="1.200" />
            <path d="M2 2h4v7H2z" fill="#000" />
          </Svg>
        </TrayCell>
        <TrayCell label="Network">
          <Svg w={17} h={16}>
            <path d="M1 15C1 7 8 1 16 1M5 15c0-6 5-10 11-10M9 15c0-3 3-6 7-6" stroke="#222" strokeWidth="1.200" />
            <circle cx="14" cy="14" r="1.600" fill="#000" />
          </Svg>
        </TrayCell>
        <TrayCell label="Volume">
          <Svg w={20} h={18}>
            <path d="M0.600 6.500h3l4-4v13l-4-4h-3z" stroke="#000" strokeWidth="1.200" />
            <path d="M10 6c1 2 1 4 0 6M13 4c3 3 3 7 0 10M16 1c4 5 4 11 0 16" stroke="#000" strokeWidth="1.200" />
          </Svg>
        </TrayCell>
        <button className="w-[46px] text-center text-[14px]">ENG</button>
        <button className="mr-[14px] flex w-[90px] flex-col items-center justify-center text-[14px] leading-[23px]">
          <span>17:12</span>
          <span>21-10-2020</span>
        </button>
        <button aria-label="Notifications" className="relative flex w-[47px] items-center pl-[2px]">
          <Svg w={20} h={20}>
            <path d="M0 0h20v15h-9v5l-5-5H0z" fill="#000" />
            <path d="M4 4.500h12M4 7.500h12M4 10.500h8" stroke="#d8e0c8" strokeWidth="1.500" />
          </Svg>
          <span className="absolute right-[14px] bottom-1 flex h-[23px] w-[23px] items-center justify-center rounded-full border border-[#777] bg-[#c4c8c0] text-[14px] leading-none">
            15
          </span>
        </button>
        <span className="w-[6px] border-l border-[#a9b3a0]" />
      </div>
    </footer>
  );
}

export default function App() {
  return (
    <div className="flex h-screen flex-col overflow-hidden">
      <TitleBar />
      <Toolbar />
      <RemoteDesktop />
      <Taskbar />
    </div>
  );
}
